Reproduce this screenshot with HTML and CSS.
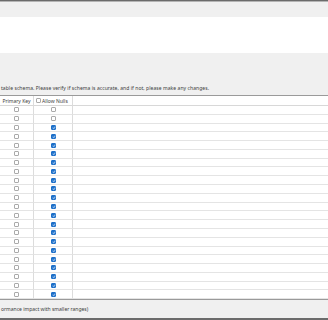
FILE: index.html
```html
<!DOCTYPE html>
<html lang="en">
<head>
  <meta charset="UTF-8">
  <title>Table Schema</title>
  <link rel="stylesheet" href="styles.css">
</head>
<body>
  <div class="window">
    <div class="topbar"></div>
    <div class="name-box"></div>
    <div class="info">
      <p class="hint">table schema. Please verify if schema is accurate, and if not, please make any changes.</p>
    </div>

    <div class="schema-grid">
      <div class="head">Primary Key</div>
      <div class="head head-left"><span class="cb"></span>Allow Nulls</div>
      <div class="head last"></div>

      <div><span class="cb"></span></div><div><span class="cb"></span></div><div class="last"></div>
      <div><span class="cb"></span></div><div><span class="cb"></span></div><div class="last"></div>
      <div><span class="cb"></span></div><div><span class="cb on"></span></div><div class="last"></div>
      <div><span class="cb"></span></div><div><span class="cb on"></span></div><div class="last"></div>
      <div><span class="cb"></span></div><div><span class="cb on"></span></div><div class="last"></div>
      <div><span class="cb"></span></div><div><span class="cb on"></span></div><div class="last"></div>
      <div><span class="cb"></span></div><div><span class="cb on"></span></div><div class="last"></div>
      <div><span class="cb"></span></div><div><span class="cb on"></span></div><div class="last"></div>
      <div><span class="cb"></span></div><div><span class="cb on"></span></div><div class="last"></div>
      <div><span class="cb"></span></div><div><span class="cb on"></span></div><div class="last"></div>
      <div><span class="cb"></span></div><div><span class="cb on"></span></div><div class="last"></div>
      <div><span class="cb"></span></div><div><span class="cb on"></span></div><div class="last"></div>
      <div><span class="cb"></span></div><div><span class="cb on"></span></div><div class="last"></div>
      <div><span class="cb"></span></div><div><span class="cb on"></span></div><div class="last"></div>
      <div><span class="cb"></span></div><div><span class="cb on"></span></div><div class="last"></div>
      <div><span class="cb"></span></div><div><span class="cb on"></span></div><div class="last"></div>
      <div><span class="cb"></span></div><div><span class="cb on"></span></div><div class="last"></div>
      <div><span class="cb"></span></div><div><span class="cb on"></span></div><div class="last"></div>
      <div><span class="cb"></span></div><div><span class="cb on"></span></div><div class="last"></div>
      <div><span class="cb"></span></div><div><span class="cb on"></span></div><div class="last"></div>
      <div><span class="cb"></span></div><div><span class="cb on"></span></div><div class="last"></div>
      <div><span class="cb"></span></div><div><span class="cb on"></span></div><div class="last"></div>
    </div>

    <div class="footer">
      <p class="hint">ormance impact with smaller ranges)</p>
    </div>
  </div>
</body>
</html>
```

FILE: styles.css
```css
/* page frame */
body {
  margin: 0;
  font-family: "Noto Sans", "Open Sans", sans-serif;
  color: #3c3c3c;
}
.window {
  height: 320px;
  display: flex;
  flex-direction: column;
  box-sizing: border-box;
  border-top: 1px solid #6b6b6b;
  border-bottom: 2px solid #6b6b6b;
  background-color: #f0f0f0;
}
.topbar {
  height: 15px;
  border-top: 1px solid #b4b4b4;
}
.name-box {
  height: 36px;
  background-color: #fff;
}
.info {
  height: 42px;
  display: flex;
  align-items: flex-end;
  border-bottom: 1px solid #9a9a9a;
}
.hint {
  margin: 0;
  padding-left: 1px;
  font-size: 5px;
  white-space: nowrap;
}
.info .hint {
  padding-bottom: 4px;
  letter-spacing: 0.06px;
}

/* schema table */
.schema-grid {
  display: grid;
  grid-template-columns: 34px 39px 1fr;
  grid-template-rows: 10px;
  grid-auto-rows: 8.79px;
  background-color: #fff;
  border-bottom: 1px solid #9a9a9a;
}
.schema-grid div {
  box-sizing: border-box;
  border-right: 1px solid #dcdcdc;
  border-bottom: 1px solid #e4e4e4;
  display: flex;
  align-items: center;
  justify-content: center;
}
.schema-grid .last {
  border-right: none;
}
.schema-grid .head {
  font-size: 5px;
  border-bottom-color: #d8d8d8;
}
.schema-grid .head-left {
  justify-content: flex-start;
  padding-left: 2px;
}
.head-left .cb {
  margin-right: 1px;
}

/* checkboxes */
.cb {
  position: relative;
  display: block;
  width: 5px;
  height: 5px;
  box-sizing: border-box;
  border: 1px solid #aaaaaa;
  border-radius: 1px;
  background-color: #fff;
}
.cb.on {
  background-color: #1c6fc9;
  border-color: #1c6fc9;
}
.cb.on::after {
  content: "";
  position: absolute;
  left: 1px;
  top: 0;
  width: 1px;
  height: 2px;
  border: solid #8fb8e6;
  border-width: 0 1px 1px 0;
  transform: rotate(40deg);
}

.footer {
  flex: 1;
  display: flex;
  align-items: center;
}
```
